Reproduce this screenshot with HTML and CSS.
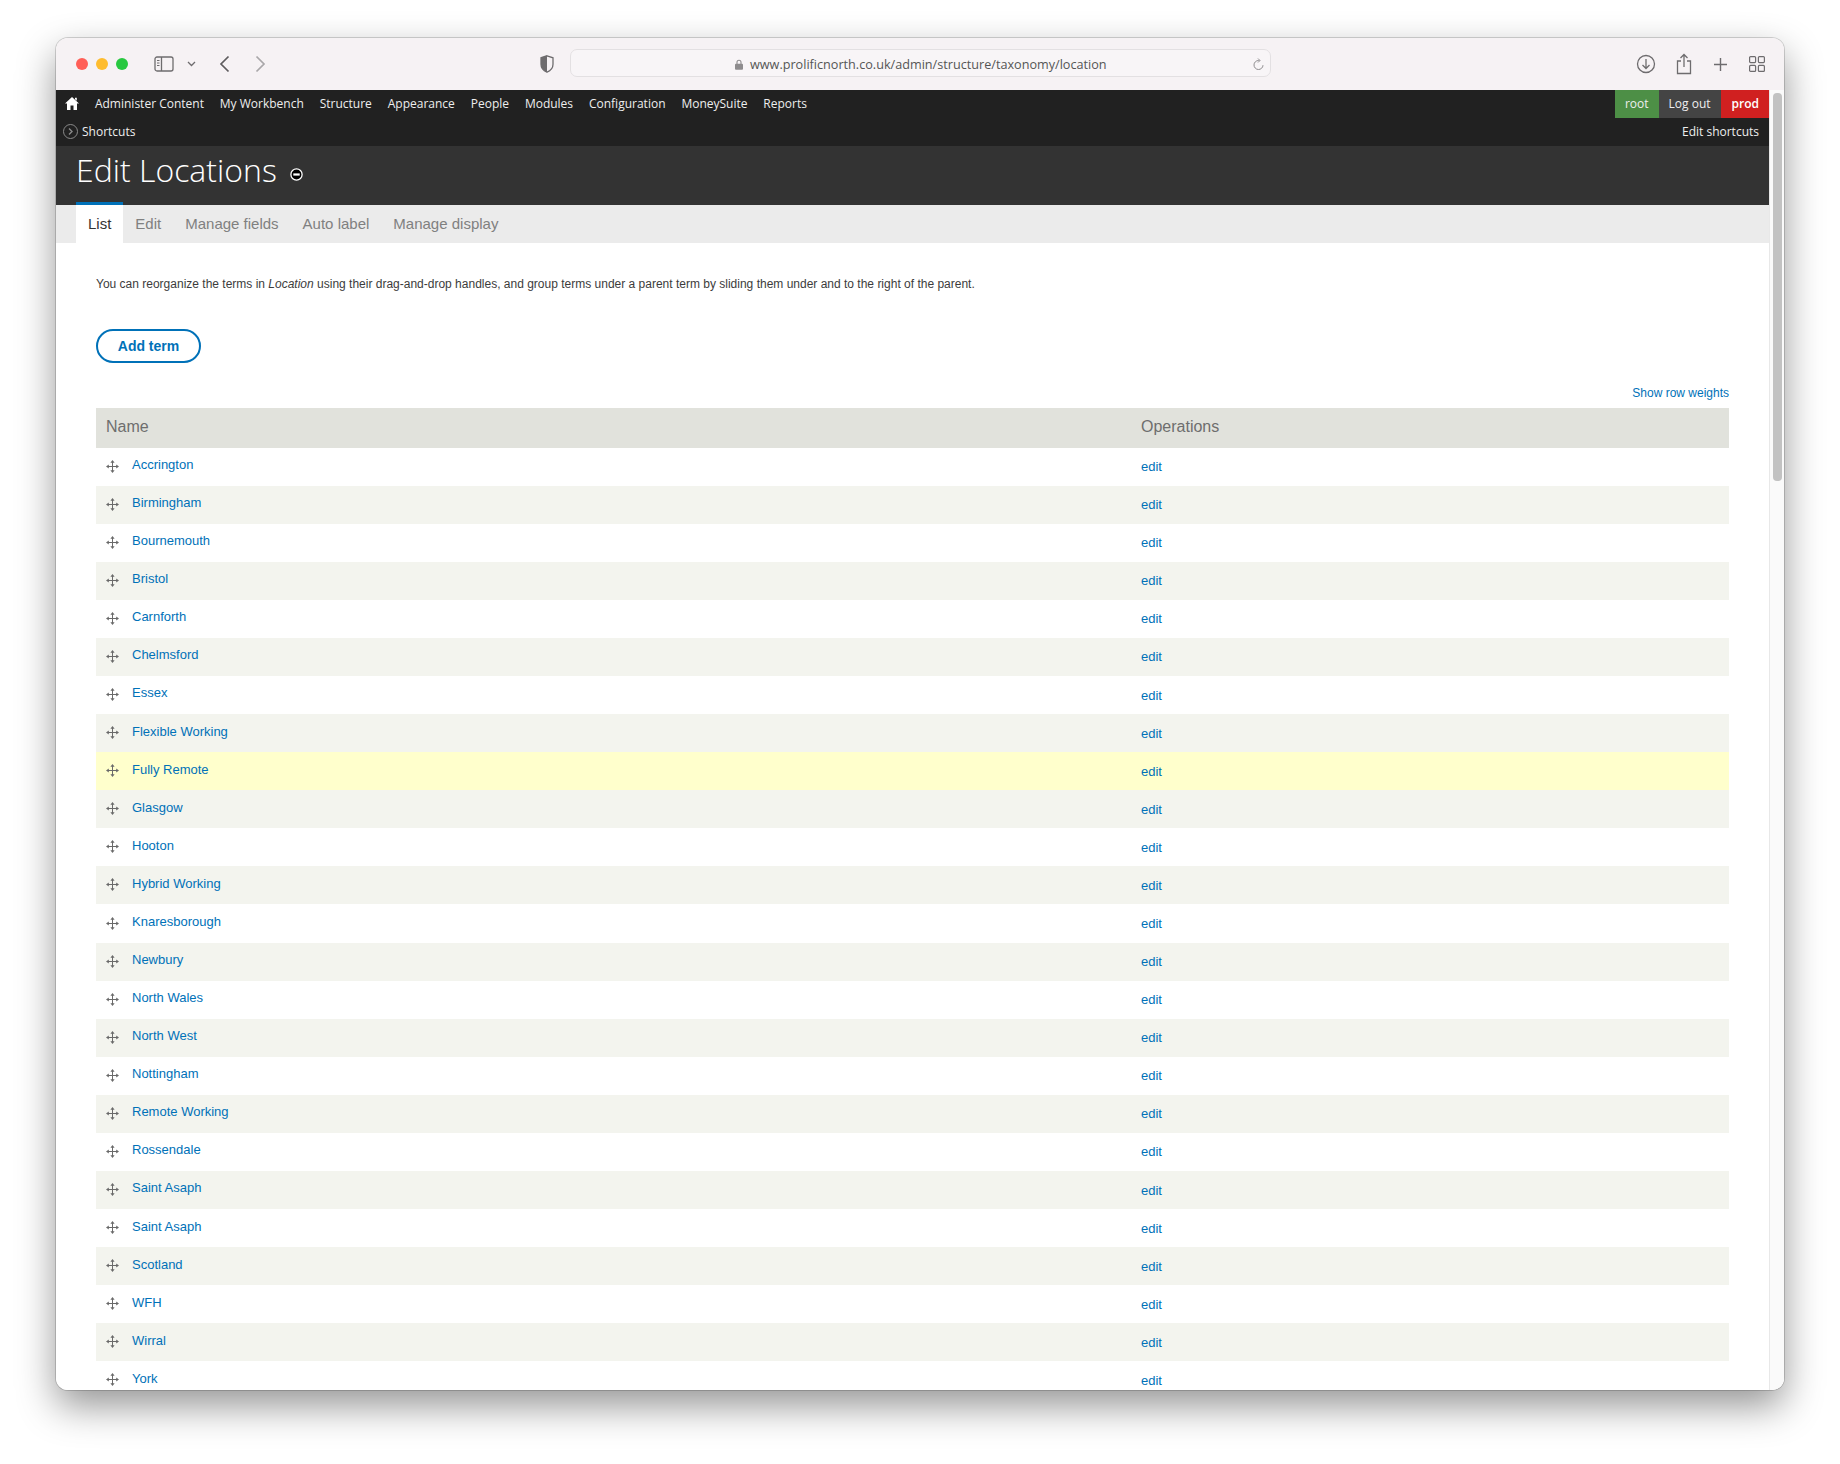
FILE: index.html
```html
<!DOCTYPE html>
<html lang="en">
<head>
    <meta charset="UTF-8">
    <title>Edit Locations</title>
    <link rel="stylesheet" href="styles.css">
</head>
<body>
    <svg class="defs" width="0" height="0">
        <symbol id="handle" viewBox="0 0 13 13">
            <path d="M6.500 2v9M2 6.500h9" stroke="#6a6a6a" stroke-width="1" fill="none"/>
            <path d="M6.500 0l2.100 2.800H4.400zM6.500 13l2.100-2.800H4.400zM0 6.500l2.800-2.100v4.200zM13 6.500l-2.800-2.100v4.200z" fill="#6a6a6a"/>
        </symbol>
    </svg>

    <div class="window">
        <!-- safari bar -->
        <div class="browser-bar">
            <div class="lights">
                <span class="light red"></span>
                <span class="light yellow"></span>
                <span class="light green"></span>
            </div>
            <svg class="sidebar-icon" width="20" height="16" viewBox="0 0 20 16" fill="none" stroke="#6e6c6e" stroke-width="1.3">
                <rect x="1" y="1" width="18" height="14" rx="2"/>
                <path d="M7.5 1v14"/>
                <path d="M3 4.5h2.5M3 7h2.5M3 9.5h2.5" stroke-width="1"/>
            </svg>
            <svg class="chevron" width="9" height="6" viewBox="0 0 9 6" fill="none" stroke="#6e6c6e" stroke-width="1.3"><path d="M1 1l3.500 3.500L8 1"/></svg>
            <svg class="back" width="11" height="18" viewBox="0 0 11 18" fill="none" stroke="#5e5c5e" stroke-width="1.7"><path d="M9.500 1.500L2 9l7.500 7.500"/></svg>
            <svg class="forward" width="11" height="18" viewBox="0 0 11 18" fill="none" stroke="#a9a7a9" stroke-width="1.7"><path d="M1.500 1.500L9 9l-7.500 7.500"/></svg>
            <svg class="shield" width="14" height="18" viewBox="0 0 14 18"><path d="M7 .8l6 2v6.500c0 3.800-2.600 6.500-6 7.900-3.400-1.400-6-4.100-6-7.900V2.800z" fill="none" stroke="#6e6c6e" stroke-width="1.300"/><path d="M7 .8l-6 2v6.500c0 3.800 2.600 6.500 6 7.900z" fill="#6e6c6e"/></svg>
            <div class="address">
                <svg class="lock" width="8" height="11" viewBox="0 0 8 11"><path d="M2 5V3.200a2 2 0 0 1 4 0V5" fill="none" stroke="#8e8c8e" stroke-width="1.100"/><rect y="4.800" width="8" height="6" rx="1" fill="#8e8c8e"/></svg>
                <span class="url">www.prolificnorth.co.uk/admin/structure/taxonomy/location</span>
                <svg class="reload" width="11" height="13" viewBox="0 0 11 13" fill="none" stroke="#8e8c8e" stroke-width="1"><path d="M6.500 2.500H5.500a4.500 4.500 0 1 0 4.500 4.700"/><path d="M5 .5l2 2-2 2"/></svg>
            </div>
            <div class="browser-actions">
                <svg width="20" height="20" viewBox="0 0 20 20" fill="none" stroke="#6e6c6e" stroke-width="1.300"><circle cx="10" cy="10" r="8.500"/><path d="M10 5v9.500M6.500 11l3.500 3.500 3.500-3.500"/></svg>
                <svg class="share" width="16" height="22" viewBox="0 0 16 22" fill="none" stroke="#6e6c6e" stroke-width="1.300"><path d="M5 8H1.500v12.500h13V8H11"/><path d="M8 14V1.500M4.500 5L8 1.500 11.500 5"/></svg>
                <svg width="15" height="15" viewBox="0 0 15 15" fill="none" stroke="#6e6c6e" stroke-width="1.400"><path d="M7.500 1v13M1 7.500h13"/></svg>
                <svg width="16" height="16" viewBox="0 0 16 16" fill="none" stroke="#6e6c6e" stroke-width="1.200"><rect x=".6" y=".6" width="6" height="6" rx="1"/><rect x="9.400" y=".6" width="6" height="6" rx="1"/><rect x=".6" y="9.400" width="6" height="6" rx="1"/><rect x="9.400" y="9.400" width="6" height="6" rx="1"/></svg>
            </div>
        </div>

        <div class="viewport">
            <div class="page">
                <div class="admin-menu">
                    <svg class="home" width="14" height="13" viewBox="0 0 14 13"><path d="M7 0l7 6.500h-2V13H8.500V8.500h-3V13H2V6.500H0zM10 .8h1.800v3L10 2.200z" fill="#fff"/></svg>
                    <a href="#">Administer Content</a>
                    <a href="#">My Workbench</a>
                    <a href="#">Structure</a>
                    <a href="#">Appearance</a>
                    <a href="#">People</a>
                    <a href="#">Modules</a>
                    <a href="#">Configuration</a>
                    <a href="#">MoneySuite</a>
                    <a href="#">Reports</a>
                    <div class="admin-user">
                        <a class="user root" href="#">root</a>
                        <a class="user logout" href="#">Log out</a>
                        <a class="user prod" href="#">prod</a>
                    </div>
                </div>
                <div class="shortcuts">
                    <svg width="15" height="15" viewBox="0 0 15 15" fill="none" stroke="#8a8a8a" stroke-width="1"><circle cx="7.500" cy="7.500" r="7"/><path d="M6 4.500l3 3-3 3" stroke-width="1.400"/></svg>
                    <a href="#">Shortcuts</a>
                    <a class="edit-shortcuts" href="#">Edit shortcuts</a>
                </div>
                <div class="title-bar">
                    <h1>Edit Locations</h1>
                    <svg class="remove" width="13" height="13" viewBox="0 0 13 13"><circle cx="6.500" cy="6.500" r="5.600" fill="#000" stroke="#fff" stroke-width="1.300"/><rect x="3.300" y="5.400" width="6.400" height="2.200" fill="#fff"/></svg>
                </div>
                <div class="tabs">
                    <a class="tab active" href="#">List</a>
                    <a class="tab" href="#">Edit</a>
                    <a class="tab" href="#">Manage fields</a>
                    <a class="tab" href="#">Auto label</a>
                    <a class="tab" href="#">Manage display</a>
                </div>

                <div class="content">
                    <p class="help">You can reorganize the terms in <em>Location</em> using their drag-and-drop handles, and group terms under a parent term by sliding them under and to the right of the parent.</p>
                    <a class="button" href="#">Add term</a>
                    <div class="weights"><a href="#">Show row weights</a></div>

                    <table class="terms">
                        <thead>
                            <tr><th class="col-name">Name</th><th>Operations</th></tr>
                        </thead>
                        <tbody>
                            <tr><td class="term"><svg class="handle"><use href="#handle"/></svg><a href="#">Accrington</a></td><td><a href="#">edit</a></td></tr>
                            <tr><td class="term"><svg class="handle"><use href="#handle"/></svg><a href="#">Birmingham</a></td><td><a href="#">edit</a></td></tr>
                            <tr><td class="term"><svg class="handle"><use href="#handle"/></svg><a href="#">Bournemouth</a></td><td><a href="#">edit</a></td></tr>
                            <tr><td class="term"><svg class="handle"><use href="#handle"/></svg><a href="#">Bristol</a></td><td><a href="#">edit</a></td></tr>
                            <tr><td class="term"><svg class="handle"><use href="#handle"/></svg><a href="#">Carnforth</a></td><td><a href="#">edit</a></td></tr>
                            <tr><td class="term"><svg class="handle"><use href="#handle"/></svg><a href="#">Chelmsford</a></td><td><a href="#">edit</a></td></tr>
                            <tr><td class="term"><svg class="handle"><use href="#handle"/></svg><a href="#">Essex</a></td><td><a href="#">edit</a></td></tr>
                            <tr><td class="term"><svg class="handle"><use href="#handle"/></svg><a href="#">Flexible Working</a></td><td><a href="#">edit</a></td></tr>
                            <tr class="highlight"><td class="term"><svg class="handle"><use href="#handle"/></svg><a href="#">Fully Remote</a></td><td><a href="#">edit</a></td></tr>
                            <tr><td class="term"><svg class="handle"><use href="#handle"/></svg><a href="#">Glasgow</a></td><td><a href="#">edit</a></td></tr>
                            <tr><td class="term"><svg class="handle"><use href="#handle"/></svg><a href="#">Hooton</a></td><td><a href="#">edit</a></td></tr>
                            <tr><td class="term"><svg class="handle"><use href="#handle"/></svg><a href="#">Hybrid Working</a></td><td><a href="#">edit</a></td></tr>
                            <tr><td class="term"><svg class="handle"><use href="#handle"/></svg><a href="#">Knaresborough</a></td><td><a href="#">edit</a></td></tr>
                            <tr><td class="term"><svg class="handle"><use href="#handle"/></svg><a href="#">Newbury</a></td><td><a href="#">edit</a></td></tr>
                            <tr><td class="term"><svg class="handle"><use href="#handle"/></svg><a href="#">North Wales</a></td><td><a href="#">edit</a></td></tr>
                            <tr><td class="term"><svg class="handle"><use href="#handle"/></svg><a href="#">North West</a></td><td><a href="#">edit</a></td></tr>
                            <tr><td class="term"><svg class="handle"><use href="#handle"/></svg><a href="#">Nottingham</a></td><td><a href="#">edit</a></td></tr>
                            <tr><td class="term"><svg class="handle"><use href="#handle"/></svg><a href="#">Remote Working</a></td><td><a href="#">edit</a></td></tr>
                            <tr><td class="term"><svg class="handle"><use href="#handle"/></svg><a href="#">Rossendale</a></td><td><a href="#">edit</a></td></tr>
                            <tr><td class="term"><svg class="handle"><use href="#handle"/></svg><a href="#">Saint Asaph</a></td><td><a href="#">edit</a></td></tr>
                            <tr><td class="term"><svg class="handle"><use href="#handle"/></svg><a href="#">Saint Asaph</a></td><td><a href="#">edit</a></td></tr>
                            <tr><td class="term"><svg class="handle"><use href="#handle"/></svg><a href="#">Scotland</a></td><td><a href="#">edit</a></td></tr>
                            <tr><td class="term"><svg class="handle"><use href="#handle"/></svg><a href="#">WFH</a></td><td><a href="#">edit</a></td></tr>
                            <tr><td class="term"><svg class="handle"><use href="#handle"/></svg><a href="#">Wirral</a></td><td><a href="#">edit</a></td></tr>
                            <tr><td class="term"><svg class="handle"><use href="#handle"/></svg><a href="#">York</a></td><td><a href="#">edit</a></td></tr>
                        </tbody>
                    </table>
                </div>
            </div>
            <div class="scrollbar"><div class="thumb"></div></div>
        </div>
    </div>
</body>
</html>
```

FILE: styles.css
```css
/* page and window */
html, body {
    height: 100%;
}

body {
    margin: 0;
    background: #fff;
    font-family: "Liberation Sans", Arial, sans-serif;
    overflow: hidden;
    box-sizing: border-box;
    padding: 38px 56px 74px 56px;
}

.defs {
    display: block;
    height: 0;
}

a {
    text-decoration: none;
    color: #0071b8;
}

.window {
    height: 100%;
    display: flex;
    flex-direction: column;
    border-radius: 12px;
    overflow: hidden;
    box-shadow: 0 0 0 1px rgba(0, 0, 0, 0.16), 0 16px 38px rgba(0, 0, 0, 0.42);
}

/* safari bar */
.browser-bar {
    flex: none;
    height: 52px;
    background: #f6f2f4;
    display: flex;
    align-items: center;
    padding-left: 20px;
}

.lights {
    display: flex;
    gap: 8px;
}

.light {
    width: 12px;
    height: 12px;
    border-radius: 50%;
}

.red { background: #ff5f57; }
.yellow { background: #febc2e; }
.green { background: #28c840; }

.sidebar-icon { margin-left: 26px; }
.chevron { margin-left: 13px; }
.back { margin-left: 23px; }
.forward { margin-left: 25px; }
.shield { margin-left: 274px; }

.address {
    width: 699px;
    height: 26px;
    margin-left: 16px;
    margin-bottom: 2px;
    border: 1px solid #e3e0e2;
    border-radius: 7px;
    background: #f8f5f7;
    display: flex;
    align-items: center;
}

.lock { margin: 2px 0 0 164px; }

.url {
    margin: 2px 0 0 7px;
    font-family: "Open Sans", sans-serif;
    font-size: 12.650px;
    color: #555;
    white-space: nowrap;
}

.reload { margin: 2px 6px 0 auto; }

.browser-actions {
    margin-left: 365px;
    width: 129px;
    display: flex;
    align-items: center;
    justify-content: space-between;
}

.share { margin-left: -1px; }

/* inner page */
.viewport {
    flex: 1;
    min-height: 0;
    display: flex;
    background: #fff;
}

.page {
    flex: 1;
    min-width: 0;
    overflow: hidden;
}

.scrollbar {
    flex: none;
    width: 15px;
    background: #fafafa;
    border-left: 1px solid #e8e8e8;
    box-sizing: border-box;
    padding: 3px 2px 0 3px;
}

.thumb {
    height: 388px;
    background: #c2c2c2;
    border-radius: 4px;
}

/* admin toolbar */
.admin-menu {
    height: 28px;
    background: #212121;
    display: flex;
    align-items: center;
    padding-bottom: 2px;
    box-sizing: border-box;
    font-family: "Open Sans", sans-serif;
    font-size: 12px;
}

.home {
    margin-left: 9px;
    margin-right: 8px;
}

.admin-menu a {
    color: #eee;
    padding: 0 7.950px;
}

.admin-user {
    margin-left: auto;
    display: flex;
    height: 28px;
    margin-bottom: -2px;
}

.admin-menu .user {
    display: flex;
    align-items: center;
    padding: 0 10px 2px;
}

.root { background: #4d8f46; }
.logout { background: #444; }
.admin-menu .prod { background: #d02020; color: #fff; font-weight: 600; padding-left: 11px; }

.shortcuts {
    height: 28px;
    background: #212121;
    display: flex;
    align-items: center;
    padding: 0 10px 2px 7px;
    box-sizing: border-box;
    font-family: "Open Sans", sans-serif;
    font-size: 12px;
}

.shortcuts a {
    color: #eee;
    margin-left: 4px;
}

.shortcuts .edit-shortcuts {
    margin-left: auto;
}

.title-bar {
    height: 59px;
    background: #333;
    display: flex;
    align-items: center;
    padding: 0 0 12px 20px;
    box-sizing: border-box;
}

.title-bar h1 {
    margin: 0;
    font-family: "Open Sans", sans-serif;
    font-weight: 300;
    font-size: 32px;
    color: #fff;
}

.remove { margin: 9px 0 0 13px; }

/* tabs */
.tabs {
    height: 38px;
    background: #ebebeb;
    display: flex;
    padding: 0 0 2px 20px;
    box-sizing: border-box;
    font-size: 15px;
}

.tab {
    display: flex;
    align-items: center;
    padding: 0 12px;
    color: #808080;
}

.tab.active {
    margin: -3px 0 -2px;
    padding-top: 0;
    padding-bottom: 2px;
    background: #fff;
    color: #333;
    border-top: 3px solid #0071b8;
}

/* content */
.content {
    padding: 0 40px;
}

.help {
    margin: 0;
    padding-top: 34px;
    font-size: 12px;
    line-height: 14px;
    color: #3c3c3c;
}

.button {
    display: inline-block;
    margin-top: 38px;
    height: 34px;
    width: 105px;
    box-sizing: border-box;
    border: 2px solid #0071b8;
    border-radius: 17px;
    text-align: center;
    line-height: 30px;
    font-size: 14px;
    font-weight: bold;
}

.weights {
    margin-top: 22px;
    height: 23px;
    text-align: right;
    font-size: 12px;
    line-height: 16px;
}

.terms {
    width: 100%;
    border-collapse: collapse;
    table-layout: fixed;
}

.terms th {
    height: 39.500px;
    padding: 0 10px 2px;
    box-sizing: border-box;
    background: #e1e2dc;
    color: #6e6e6e;
    font-size: 16px;
    font-weight: normal;
    text-align: left;
}

.col-name { width: 1035px; }

.terms td {
    height: 38.090px;
    padding: 0 10px;
    font-size: 13px;
}

.terms tbody tr:nth-child(even) { background: #f3f4ee; }
.terms tbody tr.highlight { background: #ffffcc; }

.term a {
    position: relative;
    top: -2px;
    margin-left: 13px;
}

.handle {
    width: 13px;
    height: 13px;
    vertical-align: middle;
    position: relative;
    top: -1.500px;
}
```
